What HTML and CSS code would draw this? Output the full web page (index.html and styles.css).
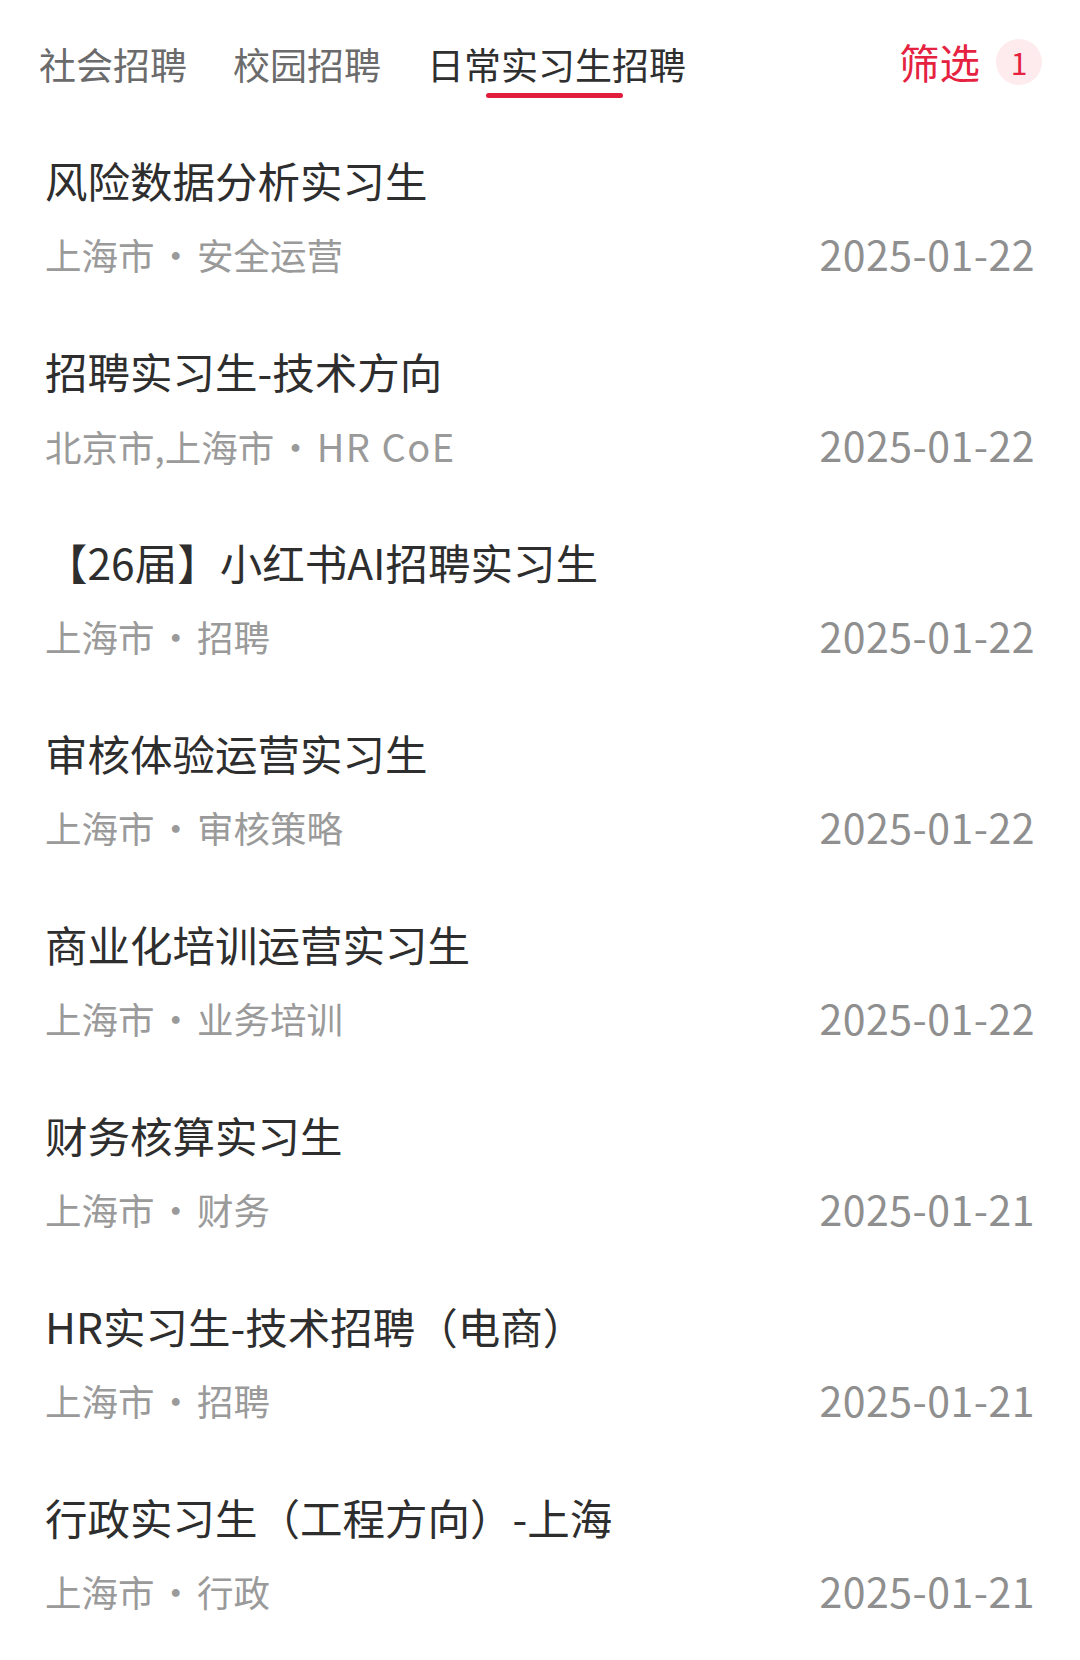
FILE: index.html
```html
<!DOCTYPE html>
<html lang="zh-CN">
<head>
<meta charset="utf-8">
<title>日常实习生招聘</title>
<link rel="stylesheet" href="styles.css">
</head>
<body>
<header class="topbar">
  <nav class="tabs">
    <span class="tab">社会招聘</span>
    <span class="tab">校园招聘</span>
    <span class="tab tab-active">日常实习生招聘</span>
  </nav>
  <div class="filter">
    <span class="filter-label">筛选</span>
    <span class="filter-badge">1</span>
  </div>
</header>
<ul class="jobs">
  <li class="job">
    <div class="job-title">风险数据分析实习生</div>
    <div class="job-meta"><span class="job-info">上海市<span class="dot">·</span>安全运营</span><span class="job-date">2025-01-22</span></div>
  </li>
  <li class="job">
    <div class="job-title">招聘实习生-技术方向</div>
    <div class="job-meta"><span class="job-info">北京市,上海市<span class="dot">·</span><span class="latin">HR CoE</span></span><span class="job-date">2025-01-22</span></div>
  </li>
  <li class="job">
    <div class="job-title">【26届】小红书AI招聘实习生</div>
    <div class="job-meta"><span class="job-info">上海市<span class="dot">·</span>招聘</span><span class="job-date">2025-01-22</span></div>
  </li>
  <li class="job">
    <div class="job-title">审核体验运营实习生</div>
    <div class="job-meta"><span class="job-info">上海市<span class="dot">·</span>审核策略</span><span class="job-date">2025-01-22</span></div>
  </li>
  <li class="job">
    <div class="job-title">商业化培训运营实习生</div>
    <div class="job-meta"><span class="job-info">上海市<span class="dot">·</span>业务培训</span><span class="job-date">2025-01-22</span></div>
  </li>
  <li class="job">
    <div class="job-title">财务核算实习生</div>
    <div class="job-meta"><span class="job-info">上海市<span class="dot">·</span>财务</span><span class="job-date">2025-01-21</span></div>
  </li>
  <li class="job">
    <div class="job-title">HR实习生-技术招聘（电商）</div>
    <div class="job-meta"><span class="job-info">上海市<span class="dot">·</span>招聘</span><span class="job-date">2025-01-21</span></div>
  </li>
  <li class="job">
    <div class="job-title">行政实习生（工程方向）-上海</div>
    <div class="job-meta"><span class="job-info">上海市<span class="dot">·</span>行政</span><span class="job-date">2025-01-21</span></div>
  </li>
</ul>
</body>
</html>
```

FILE: styles.css
```css
html, body {
  margin: 0;
  padding: 0;
  background: #ffffff;
}

body {
  width: 1080px;
  height: 1660px;
  overflow: hidden;
  font-family: "Noto Sans CJK SC", "Noto Sans", sans-serif;
  color: #333333;
}

.topbar {
  display: flex;
  align-items: center;
  justify-content: space-between;
  height: 122px;
  padding: 0 38px 0 39px;
  box-sizing: border-box;
}

.tabs {
  display: flex;
  gap: 46px;
  padding-top: 6px;
}

.tab {
  position: relative;
  font-size: 37px;
  line-height: 50px;
  color: #6b6b6b;
}

.tab-active {
  color: #2f2f2f;
}

.tab-active::after {
  content: "";
  position: absolute;
  left: 59px;
  width: 137px;
  top: 54px;
  height: 5px;
  border-radius: 3px;
  background: #e11d3c;
}

.filter {
  display: flex;
  align-items: center;
  gap: 16px;
  padding-top: 2px;
}

.filter-label {
  font-size: 40.5px;
  line-height: 50px;
  color: #e5223f;
}

.filter-badge {
  display: flex;
  align-items: center;
  justify-content: center;
  width: 46px;
  height: 46px;
  border-radius: 50%;
  background: #fdebee;
  color: #e5223f;
  font-size: 30px;
  line-height: 1;
}

.jobs {
  list-style: none;
  margin: 0;
  padding: 0;
}

.job {
  padding: 30px 45px 33px 45px;
}

.job-title {
  font-size: 42.5px;
  line-height: 56px;
  color: #2e2e2e;
  white-space: nowrap;
}

.job-meta {
  display: flex;
  justify-content: space-between;
  align-items: center;
  margin-top: 22px;
  height: 50px;
}

.job-info {
  font-size: 36.5px;
  line-height: 50px;
  color: #9a9a9a;
  white-space: nowrap;
}

.dot {
  display: inline-block;
  padding: 0 3px;
}

.latin {
  letter-spacing: 1.5px;
  font-size: 38px;
}

.job-date {
  font-size: 41px;
  line-height: 46px;
  padding-bottom: 4px;
  color: #8f8f8f;
  letter-spacing: 0.5px;
}
```
